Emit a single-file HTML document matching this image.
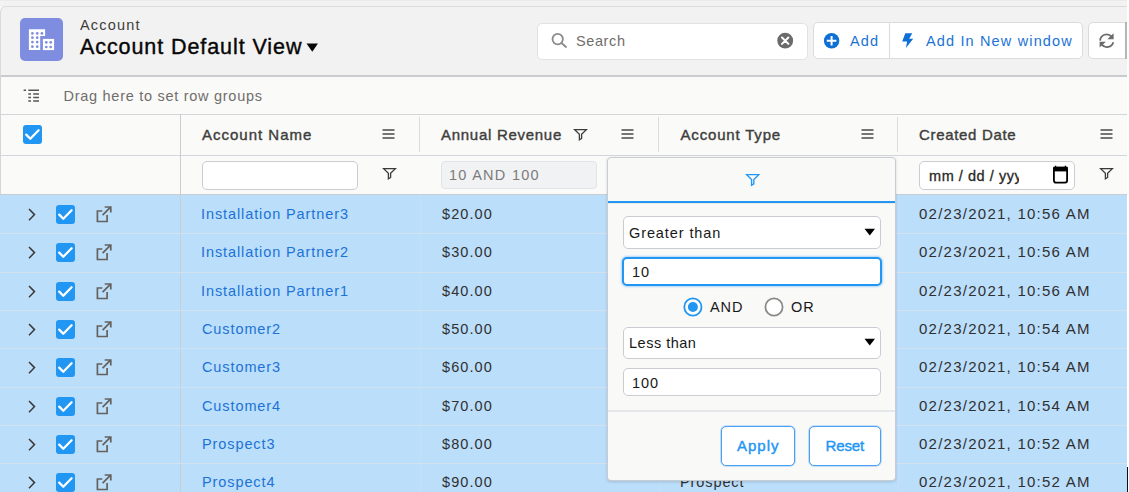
<!DOCTYPE html>
<html><head><meta charset="utf-8"><style>
*{box-sizing:border-box;margin:0;padding:0}
html,body{width:1129px;height:492px;overflow:hidden;background:#fafaf9;font-family:"Liberation Sans",sans-serif;color:#181818}
.a{position:absolute;white-space:nowrap}
svg.a{overflow:visible}
.t{position:absolute;white-space:nowrap;font-size:14.5px;line-height:16px}
.hline{position:absolute;left:0;width:1127px;height:1px;background:#d2d5da}
.rline{position:absolute;left:0;width:1127px;height:1px;background:#d3e2ef}
.cb{position:absolute;width:19px;height:19px;background:#2196f3;border-radius:3px}
.menu{position:absolute;width:12px;height:10px}
.menu i{position:absolute;left:0;width:12px;height:1.6px;background:#4a4a4a}
</style></head><body>
<div class="a" style="left:0;top:0;width:1129px;height:7px;background:#f2f2f2"></div>
<div class="a" style="left:0px;top:0px;width:1127px;height:1px;background:#ecebea"></div>
<div class="a" style="left:0px;top:6px;width:1140px;height:71px;background:#f2f2f2;border:1px solid #dddbda;border-bottom:2px solid #c9cbcf;border-radius:6px 0 0 0"></div>
<svg class="a" style="left:20px;top:18px" width="43" height="43" viewBox="0 0 43 43">
<rect x="0" y="0" width="43" height="43" rx="5" fill="#7f8de1"/>
<path d="M8.9 11.2 H25.1 V18 H20.2 V32.1 H8.9 Z" fill="#fff"/>
<rect x="22.9" y="20.9" width="11.2" height="11.2" fill="#fff"/>
<g fill="#7f8de1">
<circle cx="12.4" cy="15.4" r="1.35"/><circle cx="17.2" cy="15.4" r="1.35"/><circle cx="21.9" cy="15.4" r="1.35"/>
<circle cx="12.4" cy="19.7" r="1.35"/><circle cx="17.2" cy="19.7" r="1.35"/>
<circle cx="12.4" cy="24.1" r="1.35"/><circle cx="17.2" cy="24.1" r="1.35"/>
<circle cx="12.4" cy="28.7" r="1.35"/><circle cx="17.2" cy="28.7" r="1.35"/>
<circle cx="26.3" cy="24.3" r="1.35"/><circle cx="30.7" cy="24.3" r="1.35"/>
<circle cx="26.3" cy="29" r="1.35"/><circle cx="30.7" cy="29" r="1.35"/>
</g></svg>
<div class="t" style="left:80px;top:17px;font-size:14.5px;letter-spacing:1.2px;color:#3e3e3c;">Account</div>
<div class="t" style="left:80px;top:35.7px;font-size:21.5px;letter-spacing:0.92px;color:#080707;line-height:22px;-webkit-text-stroke:0.4px #080707;">Account Default View</div>
<svg class="a" style="left:306px;top:43px" width="13" height="9" viewBox="0 0 13 9"><path d="M0.5 0.5 H12 L6.25 8.8 Z" fill="#080707"/></svg>
<div class="a" style="left:537px;top:23px;width:271px;height:37px;background:#fff;border:1px solid #e2e2e2;border-radius:5px"></div>
<svg class="a" style="left:550px;top:31px" width="18" height="18" viewBox="0 0 18 18"><circle cx="7.7" cy="8.1" r="5.2" fill="none" stroke="#8a8a8a" stroke-width="1.8"/><path d="M11.5 12 L16 16" stroke="#8a8a8a" stroke-width="1.8" stroke-linecap="round"/></svg>
<div class="t" style="left:576px;top:33px;font-size:14.5px;letter-spacing:0.6px;color:#706e6b;">Search</div>
<svg class="a" style="left:777px;top:33px" width="16" height="16" viewBox="0 0 16 16"><circle cx="8.2" cy="7.7" r="7.9" fill="#6b6b6b"/><path d="M5 4.5 L11.4 10.9 M11.4 4.5 L5 10.9" stroke="#fff" stroke-width="2" stroke-linecap="round"/></svg>
<div class="a" style="left:813px;top:22px;width:270px;height:37px;background:#fff;border:1px solid #dddbda;border-radius:5px"></div>
<div class="a" style="left:889px;top:23px;width:1px;height:35px;background:#dddbda"></div>
<svg class="a" style="left:823px;top:32px" width="18" height="18" viewBox="0 0 18 18"><circle cx="8.6" cy="8.7" r="7.7" fill="#0e6fd4"/><path d="M3.8 8.7 H13.4 M8.6 3.9 V13.5" stroke="#fff" stroke-width="2"/></svg>
<div class="t" style="left:850px;top:33px;font-size:14.5px;letter-spacing:1.1px;color:#1b73d6;">Add</div>
<svg class="a" style="left:900px;top:32px" width="16" height="17" viewBox="0 0 16 17"><path d="M5.3 1.2 H12.3 L9.2 6.8 H13.2 L5.9 16 L7.1 9.5 H2.2 Z" fill="#0e6fd4"/></svg>
<div class="t" style="left:926px;top:33px;font-size:14.5px;letter-spacing:1.15px;color:#1b73d6;">Add In New window</div>
<div class="a" style="left:1088px;top:22px;width:50px;height:37px;background:#fff;border:1px solid #dddbda;border-radius:5px"></div>
<svg class="a" style="left:1097px;top:31px" width="20" height="20" viewBox="0 0 20 20"><g fill="none" stroke="#6b6b6b" stroke-width="1.8"><path d="M3.1 9.6 A6.6 6.6 0 0 1 14.6 5.6"/><path d="M16.3 11.2 A6.6 6.6 0 0 1 4.8 13.6"/></g><path d="M16.6 2.3 V8.3 H10.3 Z" fill="#6b6b6b"/><path d="M2.6 16.6 V10.8 H8.9 Z" fill="#6b6b6b"/></svg>
<svg class="a" style="left:22px;top:88px" width="19" height="16" viewBox="0 0 19 16"><g stroke="#555" stroke-width="1.5"><path d="M1.6 2.3 H4 M6.3 2.3 H17"/><path d="M6.3 6 H9 M11.2 6 H17"/><path d="M6.3 9.4 H9 M11.2 9.4 H17"/><path d="M6.3 13 H9 M11.2 13 H17"/></g></svg>
<div class="t" style="left:63.5px;top:88px;font-size:14.5px;letter-spacing:0.72px;color:#706e6b;">Drag here to set row groups</div>
<div class="hline" style="top:114px"></div>
<div class="a" style="left:0px;top:77px;width:1px;height:415px;background:#d2d5da"></div>
<div class="cb" style="left:23px;top:125px"></div>
<svg class="a" style="left:23px;top:125px" width="19" height="19" viewBox="0 0 19 19"><path d="M3.2 9.6 L7.3 13.7 L15.6 5.2" fill="none" stroke="#fff" stroke-width="2.3" stroke-linecap="round" stroke-linejoin="round"/></svg>
<div class="t" style="left:202px;top:127px;font-size:15px;letter-spacing:1.0px;color:#3e3e3c;-webkit-text-stroke:0.4px #3e3e3c;">Account Name</div>
<svg class="a" style="left:382px;top:129px" width="13" height="10" viewBox="0 0 13 10"><g stroke="#4a4a4a" stroke-width="1.5"><path d="M0.5 1H12.5M0.5 5H12.5M0.5 9H12.5"/></g></svg>
<div class="t" style="left:441px;top:127px;font-size:15px;letter-spacing:0.72px;color:#3e3e3c;-webkit-text-stroke:0.4px #3e3e3c;">Annual Revenue</div>
<svg class="a" style="left:573.5px;top:129px" width="14" height="12" viewBox="0 0 14 12"><path d="M0.65 0.65 H12.35 L7.61 5.29 V9.43 L5.39 10.85 V5.29 Z" fill="none" stroke="#3a3a3a" stroke-width="1.3" stroke-linejoin="miter"/></svg>
<svg class="a" style="left:621px;top:129px" width="13" height="10" viewBox="0 0 13 10"><g stroke="#4a4a4a" stroke-width="1.5"><path d="M0.5 1H12.5M0.5 5H12.5M0.5 9H12.5"/></g></svg>
<div class="t" style="left:680.5px;top:127px;font-size:15px;letter-spacing:0.82px;color:#3e3e3c;-webkit-text-stroke:0.4px #3e3e3c;">Account Type</div>
<svg class="a" style="left:861px;top:129px" width="13" height="10" viewBox="0 0 13 10"><g stroke="#4a4a4a" stroke-width="1.5"><path d="M0.5 1H12.5M0.5 5H12.5M0.5 9H12.5"/></g></svg>
<div class="t" style="left:919px;top:127px;font-size:15px;letter-spacing:0.67px;color:#3e3e3c;-webkit-text-stroke:0.4px #3e3e3c;">Created Date</div>
<svg class="a" style="left:1100px;top:129px" width="13" height="10" viewBox="0 0 13 10"><g stroke="#4a4a4a" stroke-width="1.5"><path d="M0.5 1H12.5M0.5 5H12.5M0.5 9H12.5"/></g></svg>
<div class="a" style="left:419px;top:117px;width:1px;height:35px;background:#d8dbdf"></div>
<div class="a" style="left:658px;top:117px;width:1px;height:35px;background:#d8dbdf"></div>
<div class="a" style="left:897px;top:117px;width:1px;height:35px;background:#d8dbdf"></div>
<div class="hline" style="top:155px"></div>
<div class="a" style="left:202px;top:161px;width:156px;height:29px;background:#fff;border:1px solid #c9ccd1;border-radius:5px"></div>
<svg class="a" style="left:382.5px;top:168px" width="14" height="12" viewBox="0 0 14 12"><path d="M0.65 0.65 H12.35 L7.61 5.29 V9.43 L5.39 10.85 V5.29 Z" fill="none" stroke="#3a3a3a" stroke-width="1.3" stroke-linejoin="miter"/></svg>
<div class="a" style="left:441px;top:161px;width:156px;height:28px;background:#f1f2f4;border:1px solid #e1e3e6;border-radius:4px"></div>
<div class="t" style="left:449px;top:167px;font-size:14.5px;letter-spacing:1.27px;color:#7b7b7b;">10 AND 100</div>
<div class="a" style="left:919px;top:161px;width:156px;height:29px;background:#fff;border:1px solid #c9ccd1;border-radius:5px"></div>
<div class="a" style="left:929px;top:166px;width:90px;height:20px;overflow:hidden"><div class="t" style="left:0;top:2px;font-size:14.5px;letter-spacing:0.55px;color:#2b2826;-webkit-text-stroke:0.3px #2b2826">mm / dd / yyyy</div></div>
<svg class="a" style="left:1052px;top:165px" width="17" height="19" viewBox="0 0 17 19"><rect x="1.9" y="2.6" width="13.2" height="15" rx="2" fill="none" stroke="#000" stroke-width="1.8"/><rect x="1.2" y="1.8" width="14.6" height="4.6" fill="#000"/><path d="M3.5 0.8 V3 M13.5 0.8 V3" stroke="#000" stroke-width="1.5"/></svg>
<svg class="a" style="left:1100px;top:168px" width="14" height="12" viewBox="0 0 14 12"><path d="M0.65 0.65 H12.35 L7.61 5.29 V9.43 L5.39 10.85 V5.29 Z" fill="none" stroke="#3a3a3a" stroke-width="1.3" stroke-linejoin="miter"/></svg>
<div class="a" style="left:0px;top:194px;width:1127px;height:298px;background:#bbdefb"></div>
<div class="hline" style="top:194px;background:#c9ccd1"></div>
<div class="a" style="left:180px;top:114px;width:1px;height:378px;background:#c9cdd2"></div>
<div class="a" style="left:420px;top:195px;width:1px;height:297px;background:#c6e0f5"></div>
<div class="a" style="left:659px;top:195px;width:1px;height:297px;background:#c6e0f5"></div>
<div class="a" style="left:898px;top:195px;width:1px;height:297px;background:#c6e0f5"></div>
<div class="rline" style="top:233px"></div>
<div class="rline" style="top:272px"></div>
<div class="rline" style="top:310px"></div>
<div class="rline" style="top:348px"></div>
<div class="rline" style="top:387px"></div>
<div class="rline" style="top:425px"></div>
<div class="rline" style="top:463px"></div>
<svg class="a" style="left:26px;top:206px" width="12" height="16" viewBox="0 0 12 16"><path d="M3 3 L8.5 8.6 L3 14.2" fill="none" stroke="#3a3a3a" stroke-width="1.5"/></svg>
<div class="cb" style="left:56px;top:205px"></div>
<svg class="a" style="left:56px;top:205px" width="19" height="19" viewBox="0 0 19 19"><path d="M3.2 9.6 L7.3 13.7 L15.6 5.2" fill="none" stroke="#fff" stroke-width="2.3" stroke-linecap="round" stroke-linejoin="round"/></svg>
<svg class="a" style="left:95px;top:205px" width="18" height="19" viewBox="0 0 18 19"><path d="M7.3 6 H2.4 V16.5 H12.1 V10" fill="none" stroke="#66615c" stroke-width="1.7"/><path d="M7.6 10.2 L15.3 2.4 M9.7 2 H15.8 V7.5" fill="none" stroke="#66615c" stroke-width="1.7"/></svg>
<div class="t" style="left:201px;top:206px;font-size:14.5px;letter-spacing:0.9px;color:#1b73d6;">Installation Partner3</div>
<div class="t" style="left:442px;top:206px;font-size:14.5px;letter-spacing:1.1px;color:#303030;">$20.00</div>
<div class="t" style="left:680px;top:206px;font-size:14.5px;letter-spacing:0.9px;color:#303030;">Partner</div>
<div class="t" style="left:919px;top:205.5px;font-size:15px;letter-spacing:1.25px;color:#303030;">02/23/2021, 10:56 AM</div>
<svg class="a" style="left:26px;top:244px" width="12" height="16" viewBox="0 0 12 16"><path d="M3 3 L8.5 8.6 L3 14.2" fill="none" stroke="#3a3a3a" stroke-width="1.5"/></svg>
<div class="cb" style="left:56px;top:243px"></div>
<svg class="a" style="left:56px;top:243px" width="19" height="19" viewBox="0 0 19 19"><path d="M3.2 9.6 L7.3 13.7 L15.6 5.2" fill="none" stroke="#fff" stroke-width="2.3" stroke-linecap="round" stroke-linejoin="round"/></svg>
<svg class="a" style="left:95px;top:243px" width="18" height="19" viewBox="0 0 18 19"><path d="M7.3 6 H2.4 V16.5 H12.1 V10" fill="none" stroke="#66615c" stroke-width="1.7"/><path d="M7.6 10.2 L15.3 2.4 M9.7 2 H15.8 V7.5" fill="none" stroke="#66615c" stroke-width="1.7"/></svg>
<div class="t" style="left:201px;top:244px;font-size:14.5px;letter-spacing:0.9px;color:#1b73d6;">Installation Partner2</div>
<div class="t" style="left:442px;top:244px;font-size:14.5px;letter-spacing:1.1px;color:#303030;">$30.00</div>
<div class="t" style="left:680px;top:244px;font-size:14.5px;letter-spacing:0.9px;color:#303030;">Partner</div>
<div class="t" style="left:919px;top:243.5px;font-size:15px;letter-spacing:1.25px;color:#303030;">02/23/2021, 10:56 AM</div>
<svg class="a" style="left:26px;top:283px" width="12" height="16" viewBox="0 0 12 16"><path d="M3 3 L8.5 8.6 L3 14.2" fill="none" stroke="#3a3a3a" stroke-width="1.5"/></svg>
<div class="cb" style="left:56px;top:282px"></div>
<svg class="a" style="left:56px;top:282px" width="19" height="19" viewBox="0 0 19 19"><path d="M3.2 9.6 L7.3 13.7 L15.6 5.2" fill="none" stroke="#fff" stroke-width="2.3" stroke-linecap="round" stroke-linejoin="round"/></svg>
<svg class="a" style="left:95px;top:282px" width="18" height="19" viewBox="0 0 18 19"><path d="M7.3 6 H2.4 V16.5 H12.1 V10" fill="none" stroke="#66615c" stroke-width="1.7"/><path d="M7.6 10.2 L15.3 2.4 M9.7 2 H15.8 V7.5" fill="none" stroke="#66615c" stroke-width="1.7"/></svg>
<div class="t" style="left:201px;top:283px;font-size:14.5px;letter-spacing:0.9px;color:#1b73d6;">Installation Partner1</div>
<div class="t" style="left:442px;top:283px;font-size:14.5px;letter-spacing:1.1px;color:#303030;">$40.00</div>
<div class="t" style="left:680px;top:283px;font-size:14.5px;letter-spacing:0.9px;color:#303030;">Partner</div>
<div class="t" style="left:919px;top:282.5px;font-size:15px;letter-spacing:1.25px;color:#303030;">02/23/2021, 10:56 AM</div>
<svg class="a" style="left:26px;top:321px" width="12" height="16" viewBox="0 0 12 16"><path d="M3 3 L8.5 8.6 L3 14.2" fill="none" stroke="#3a3a3a" stroke-width="1.5"/></svg>
<div class="cb" style="left:56px;top:320px"></div>
<svg class="a" style="left:56px;top:320px" width="19" height="19" viewBox="0 0 19 19"><path d="M3.2 9.6 L7.3 13.7 L15.6 5.2" fill="none" stroke="#fff" stroke-width="2.3" stroke-linecap="round" stroke-linejoin="round"/></svg>
<svg class="a" style="left:95px;top:320px" width="18" height="19" viewBox="0 0 18 19"><path d="M7.3 6 H2.4 V16.5 H12.1 V10" fill="none" stroke="#66615c" stroke-width="1.7"/><path d="M7.6 10.2 L15.3 2.4 M9.7 2 H15.8 V7.5" fill="none" stroke="#66615c" stroke-width="1.7"/></svg>
<div class="t" style="left:202px;top:321px;font-size:14.5px;letter-spacing:0.9px;color:#1b73d6;">Customer2</div>
<div class="t" style="left:442px;top:321px;font-size:14.5px;letter-spacing:1.1px;color:#303030;">$50.00</div>
<div class="t" style="left:680px;top:321px;font-size:14.5px;letter-spacing:0.9px;color:#303030;">Customer</div>
<div class="t" style="left:919px;top:320.5px;font-size:15px;letter-spacing:1.25px;color:#303030;">02/23/2021, 10:54 AM</div>
<svg class="a" style="left:26px;top:359px" width="12" height="16" viewBox="0 0 12 16"><path d="M3 3 L8.5 8.6 L3 14.2" fill="none" stroke="#3a3a3a" stroke-width="1.5"/></svg>
<div class="cb" style="left:56px;top:358px"></div>
<svg class="a" style="left:56px;top:358px" width="19" height="19" viewBox="0 0 19 19"><path d="M3.2 9.6 L7.3 13.7 L15.6 5.2" fill="none" stroke="#fff" stroke-width="2.3" stroke-linecap="round" stroke-linejoin="round"/></svg>
<svg class="a" style="left:95px;top:358px" width="18" height="19" viewBox="0 0 18 19"><path d="M7.3 6 H2.4 V16.5 H12.1 V10" fill="none" stroke="#66615c" stroke-width="1.7"/><path d="M7.6 10.2 L15.3 2.4 M9.7 2 H15.8 V7.5" fill="none" stroke="#66615c" stroke-width="1.7"/></svg>
<div class="t" style="left:202px;top:359px;font-size:14.5px;letter-spacing:0.9px;color:#1b73d6;">Customer3</div>
<div class="t" style="left:442px;top:359px;font-size:14.5px;letter-spacing:1.1px;color:#303030;">$60.00</div>
<div class="t" style="left:680px;top:359px;font-size:14.5px;letter-spacing:0.9px;color:#303030;">Customer</div>
<div class="t" style="left:919px;top:358.5px;font-size:15px;letter-spacing:1.25px;color:#303030;">02/23/2021, 10:54 AM</div>
<svg class="a" style="left:26px;top:398px" width="12" height="16" viewBox="0 0 12 16"><path d="M3 3 L8.5 8.6 L3 14.2" fill="none" stroke="#3a3a3a" stroke-width="1.5"/></svg>
<div class="cb" style="left:56px;top:397px"></div>
<svg class="a" style="left:56px;top:397px" width="19" height="19" viewBox="0 0 19 19"><path d="M3.2 9.6 L7.3 13.7 L15.6 5.2" fill="none" stroke="#fff" stroke-width="2.3" stroke-linecap="round" stroke-linejoin="round"/></svg>
<svg class="a" style="left:95px;top:397px" width="18" height="19" viewBox="0 0 18 19"><path d="M7.3 6 H2.4 V16.5 H12.1 V10" fill="none" stroke="#66615c" stroke-width="1.7"/><path d="M7.6 10.2 L15.3 2.4 M9.7 2 H15.8 V7.5" fill="none" stroke="#66615c" stroke-width="1.7"/></svg>
<div class="t" style="left:202px;top:398px;font-size:14.5px;letter-spacing:0.9px;color:#1b73d6;">Customer4</div>
<div class="t" style="left:442px;top:398px;font-size:14.5px;letter-spacing:1.1px;color:#303030;">$70.00</div>
<div class="t" style="left:680px;top:398px;font-size:14.5px;letter-spacing:0.9px;color:#303030;">Customer</div>
<div class="t" style="left:919px;top:397.5px;font-size:15px;letter-spacing:1.25px;color:#303030;">02/23/2021, 10:54 AM</div>
<svg class="a" style="left:26px;top:436px" width="12" height="16" viewBox="0 0 12 16"><path d="M3 3 L8.5 8.6 L3 14.2" fill="none" stroke="#3a3a3a" stroke-width="1.5"/></svg>
<div class="cb" style="left:56px;top:435px"></div>
<svg class="a" style="left:56px;top:435px" width="19" height="19" viewBox="0 0 19 19"><path d="M3.2 9.6 L7.3 13.7 L15.6 5.2" fill="none" stroke="#fff" stroke-width="2.3" stroke-linecap="round" stroke-linejoin="round"/></svg>
<svg class="a" style="left:95px;top:435px" width="18" height="19" viewBox="0 0 18 19"><path d="M7.3 6 H2.4 V16.5 H12.1 V10" fill="none" stroke="#66615c" stroke-width="1.7"/><path d="M7.6 10.2 L15.3 2.4 M9.7 2 H15.8 V7.5" fill="none" stroke="#66615c" stroke-width="1.7"/></svg>
<div class="t" style="left:202px;top:436px;font-size:14.5px;letter-spacing:0.9px;color:#1b73d6;">Prospect3</div>
<div class="t" style="left:442px;top:436px;font-size:14.5px;letter-spacing:1.1px;color:#303030;">$80.00</div>
<div class="t" style="left:680px;top:436px;font-size:14.5px;letter-spacing:0.9px;color:#303030;">Prospect</div>
<div class="t" style="left:919px;top:435.5px;font-size:15px;letter-spacing:1.25px;color:#303030;">02/23/2021, 10:52 AM</div>
<svg class="a" style="left:26px;top:474px" width="12" height="16" viewBox="0 0 12 16"><path d="M3 3 L8.5 8.6 L3 14.2" fill="none" stroke="#3a3a3a" stroke-width="1.5"/></svg>
<div class="cb" style="left:56px;top:473px"></div>
<svg class="a" style="left:56px;top:473px" width="19" height="19" viewBox="0 0 19 19"><path d="M3.2 9.6 L7.3 13.7 L15.6 5.2" fill="none" stroke="#fff" stroke-width="2.3" stroke-linecap="round" stroke-linejoin="round"/></svg>
<svg class="a" style="left:95px;top:473px" width="18" height="19" viewBox="0 0 18 19"><path d="M7.3 6 H2.4 V16.5 H12.1 V10" fill="none" stroke="#66615c" stroke-width="1.7"/><path d="M7.6 10.2 L15.3 2.4 M9.7 2 H15.8 V7.5" fill="none" stroke="#66615c" stroke-width="1.7"/></svg>
<div class="t" style="left:202px;top:474px;font-size:14.5px;letter-spacing:0.9px;color:#1b73d6;">Prospect4</div>
<div class="t" style="left:442px;top:474px;font-size:14.5px;letter-spacing:1.1px;color:#303030;">$90.00</div>
<div class="t" style="left:680px;top:474px;font-size:14.5px;letter-spacing:0.9px;color:#303030;">Prospect</div>
<div class="t" style="left:919px;top:473.5px;font-size:15px;letter-spacing:1.25px;color:#303030;">02/23/2021, 10:52 AM</div>
<div class="a" style="left:607px;top:157px;width:289px;height:324px;background:#f9f9f8;border:1px solid #c8ccd3;border-radius:4px;box-shadow:0 1px 3px rgba(0,0,0,0.15)"></div>
<svg class="a" style="left:746px;top:173.5px" width="14" height="13" viewBox="0 0 14 13"><path d="M0.68 0.68 H12.72 L7.84 5.52 V9.84 L5.56 11.32 V5.52 Z" fill="none" stroke="#2196f3" stroke-width="1.35" stroke-linejoin="miter"/></svg>
<div class="a" style="left:608px;top:201px;width:287px;height:2px;background:#2196f3"></div>
<div class="a" style="left:608px;top:203px;width:287px;height:1px;background:#e8e8e8"></div>
<div class="a" style="left:623px;top:216px;width:258px;height:33px;background:#fff;border:1px solid #c9ccd1;border-radius:5px"></div>
<div class="t" style="left:629px;top:225px;font-size:14.5px;letter-spacing:0.9px;color:#181818;">Greater than</div>
<svg class="a" style="left:864px;top:228px" width="12" height="9" viewBox="0 0 12 9"><path d="M0.5 0.8 H11 L5.75 7.5 Z" fill="#000"/></svg>
<div class="a" style="left:622px;top:257px;width:260px;height:29px;background:#fff;border:2px solid #2196f3;border-radius:5px;box-shadow:0 0 2px 1px rgba(33,150,243,0.35)"></div>
<div class="t" style="left:632px;top:264px;font-size:14.5px;letter-spacing:0.9px;color:#181818;">10</div>
<svg class="a" style="left:683px;top:297px" width="20" height="20" viewBox="0 0 20 20"><circle cx="9.9" cy="10" r="8.6" fill="#fff" stroke="#2196f3" stroke-width="1.8"/><circle cx="9.9" cy="10" r="5" fill="#2196f3"/></svg>
<div class="t" style="left:710px;top:299px;font-size:14.5px;letter-spacing:0.9px;color:#181818;">AND</div>
<svg class="a" style="left:764px;top:297px" width="20" height="20" viewBox="0 0 20 20"><circle cx="10" cy="10" r="8.6" fill="#fff" stroke="#8a8a8a" stroke-width="1.8"/></svg>
<div class="t" style="left:791px;top:299px;font-size:14.5px;letter-spacing:0.9px;color:#181818;">OR</div>
<div class="a" style="left:623px;top:327px;width:258px;height:32px;background:#fff;border:1px solid #c9ccd1;border-radius:5px"></div>
<div class="t" style="left:629px;top:335px;font-size:14.5px;letter-spacing:0.5px;color:#181818;">Less than</div>
<svg class="a" style="left:864px;top:338px" width="12" height="9" viewBox="0 0 12 9"><path d="M0.5 0.8 H11 L5.75 7.5 Z" fill="#000"/></svg>
<div class="a" style="left:623px;top:368px;width:258px;height:28px;background:#fff;border:1px solid #c9ccd1;border-radius:5px"></div>
<div class="t" style="left:632px;top:375px;font-size:14.5px;letter-spacing:0.9px;color:#181818;">100</div>
<div class="a" style="left:608px;top:410px;width:287px;height:2px;background:#e6e7ea"></div>
<div class="a" style="left:721px;top:426px;width:74px;height:40px;background:#fff;border:1px solid #4aa0f4;border-radius:5px;box-shadow:0 0 0 0.8px rgba(99,174,246,0.45)"></div>
<div class="t" style="left:737px;top:438px;font-size:15px;letter-spacing:1.0px;color:#2196f3;-webkit-text-stroke:0.4px #2196f3;">Apply</div>
<div class="a" style="left:809px;top:426px;width:72px;height:40px;background:#fff;border:1px solid #4aa0f4;border-radius:5px;box-shadow:0 0 0 0.8px rgba(99,174,246,0.45)"></div>
<div class="t" style="left:825.5px;top:438px;font-size:15px;letter-spacing:-0.1px;color:#2196f3;-webkit-text-stroke:0.4px #2196f3;">Reset</div>
<div class="a" style="left:1127px;top:0px;width:2px;height:492px;background:#fff"></div>
<div class="a" style="left:1125px;top:22px;width:2px;height:37px;background:#b5b5b5"></div>
<div class="a" style="left:1127px;top:467px;width:1px;height:25px;background:#111"></div>
</body></html>
